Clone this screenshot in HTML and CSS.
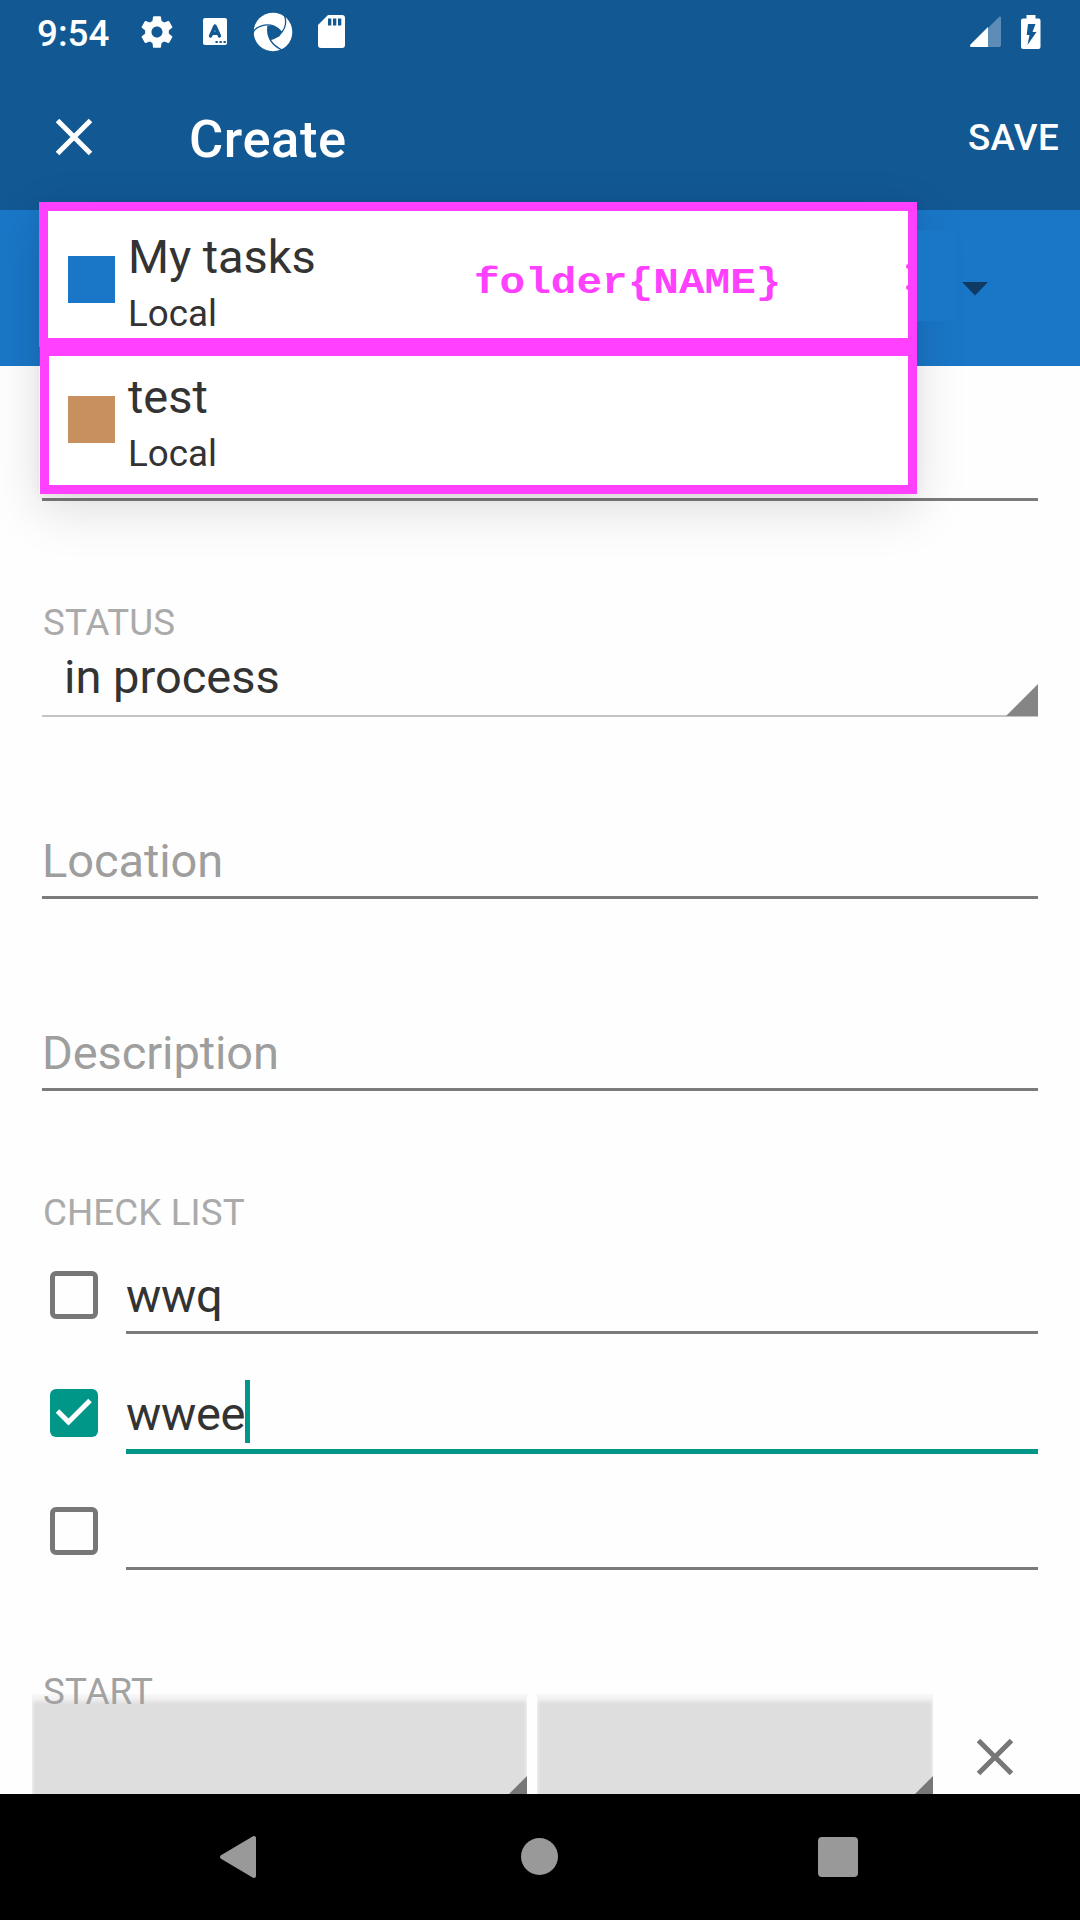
FILE: index.html
```html
<!DOCTYPE html>
<html lang="en">
<head>
<meta charset="utf-8">
<title>Create</title>
<link rel="stylesheet" href="styles.css">
</head>
<body>
<div class="screen">
  <header class="header">
    <div class="status-bar">
      <span class="clock">9:54</span>
      <svg class="icon-gear" width="38" height="38" viewBox="0 0 24 24"><path fill="#fff" d="M19.43 12.98c.04-.32.07-.64.07-.98s-.03-.66-.07-.98l2.11-1.65c.19-.15.24-.42.12-.64l-2-3.46c-.12-.22-.39-.3-.61-.22l-2.49 1c-.52-.4-1.08-.73-1.69-.98l-.38-2.65C14.46 2.18 14.25 2 14 2h-4c-.25 0-.46.18-.49.42l-.38 2.65c-.61.25-1.17.59-1.69.98l-2.49-1c-.23-.09-.49 0-.61.22l-2 3.46c-.13.22-.07.49.12.64l2.11 1.65c-.04.32-.07.65-.07.98s.03.66.07.98l-2.11 1.65c-.19.15-.24.42-.12.64l2 3.46c.12.22.39.3.61.22l2.49-1c.52.4 1.08.73 1.69.98l.38 2.65c.03.24.24.42.49.42h4c.25 0 .46-.18.49-.42l.38-2.65c.61-.25 1.17-.59 1.69-.98l2.49 1c.23.09.49 0 .61-.22l2-3.46c.12-.22.07-.49-.12-.64l-2.11-1.65zM12 15.5c-1.93 0-3.5-1.57-3.5-3.5s1.57-3.5 3.5-3.5 3.5 1.57 3.5 3.5-1.57 3.5-3.5 3.5z"/></svg>
      <svg class="icon-keyboard" width="24" height="27" viewBox="0 0 24 27"><rect width="24" height="27" rx="2" fill="#fff"/><path d="M7.500 18L12 8l4.500 10M9 15.200h6" fill="none" stroke="#125893" stroke-width="3.400" stroke-linecap="round" stroke-linejoin="round"/><path d="M12.500 23h2.300v2h-2.300zM16.500 23h2.300v2h-2.300zM20.500 23h2.300v2h-2.300z" fill="#125893"/></svg>
      <svg class="icon-swirl" width="40" height="40" viewBox="0 0 40 40"><circle cx="20" cy="20" r="19.300" fill="#fff"/><path d="M15 14Q21 12 28.500 19.500L26.300 24.500L17 27.500Q14 21 15 14Z" fill="#125893"/><g fill="none" stroke="#125893" stroke-width="1.300"><path d="M0 21C2 15 12 11 21 14Q25.500 16 28.500 20"/><path d="M15 13.500C13.500 24 18 33 30 38.500"/><path d="M17 27.500C26 26 36 16 31.500 3.500"/></g></svg>
      <svg class="icon-sd" width="27" height="33" viewBox="0 0 27 33"><path fill="#fff" d="M10 0h14a3 3 0 0 1 3 3v27a3 3 0 0 1-3 3H3a3 3 0 0 1-3-3V10z"/><path fill="#125893" d="M10 3.500h3.300v7H10zM15 3.500h3.300v7H15zM20 3.500h3.300v7H20z"/></svg>
      <span class="spacer"></span>
      <svg class="icon-signal" width="31" height="31" viewBox="0 0 31 31"><path fill="#5d8db6" d="M18 12L29 1q2-1.500 2 1v27q0 2-2 2H18z"/><path fill="#fff" d="M18 11v20H1.500Q-1 30.500.500 28.500z"/></svg>
      <svg class="icon-battery" width="20" height="34" viewBox="0 0 20 34"><path fill="#fff" d="M5.500 0h9v3.500h3.200Q19.500 3.500 19.500 5.500v26.500q0 2-2 2H2q-2 0-2-2V5.500q0-2 2-2h3.500z"/><path fill="#125893" d="M7 9h7.500l-3 8H15.500L6.500 30l2-10H5.700z"/></svg>
    </div>
    <div class="app-bar">
      <svg class="icon-close" width="38" height="38" viewBox="0 0 38 38"><path d="M2.500 2.500l33 33M35.500 2.500l-33 33" stroke="#fff" stroke-width="5"/></svg>
      <h1 class="title">Create</h1>
      <span class="save">SAVE</span>
    </div>
  </header>
  <div class="folder-bar">
    <svg class="folder-arrow" width="26" height="14" viewBox="0 0 26 14"><path d="M0 0h26L13 13.500z" fill="#0f3a63"/></svg>
  </div>
  <main class="form">
    <div class="field field-name"></div>
    <div class="label label-status">STATUS</div>
    <div class="spinner">in process<svg class="corner" width="32" height="32" viewBox="0 0 32 32"><path d="M32 0v32H0z" fill="#858585"/></svg></div>
    <div class="field field-location">Location</div>
    <div class="field field-description">Description</div>
    <div class="label label-checklist">CHECK LIST</div>
    <ul class="checklist">
      <li class="check-row"><span class="box"></span><span class="check-text">wwq</span></li>
      <li class="check-row checked"><span class="box"><svg width="48" height="48" viewBox="0 0 48 48"><path d="M7.500 22L18.500 33L40 11.500" fill="none" stroke="#fff" stroke-width="5"/></svg></span><span class="check-text focused">wwee<i class="caret"></i></span></li>
      <li class="check-row"><span class="box"></span><span class="check-text"></span></li>
    </ul>
    <div class="label label-start">START</div>
    <div class="date-row">
      <span class="picker picker-date"><svg width="18" height="18" viewBox="0 0 18 18"><path d="M18 0v18H0z" fill="#777"/></svg></span>
      <span class="picker picker-time"><svg width="18" height="18" viewBox="0 0 18 18"><path d="M18 0v18H0z" fill="#777"/></svg></span>
      <svg class="icon-clear" width="38" height="38" viewBox="0 0 38 38"><path d="M2.500 2.500l33 33M35.500 2.500l-33 33" stroke="#777" stroke-width="5"/></svg>
    </div>
  </main>
  <nav class="nav-bar">
    <svg class="nav-back" width="38" height="44" viewBox="0 0 38 44"><path d="M35 3v38L3 22z" fill="#999" stroke="#999" stroke-width="4" stroke-linejoin="round"/></svg>
    <span class="nav-home"></span>
    <span class="nav-recent"></span>
  </nav>
  <div class="popup">
    <div class="option option-first"><span class="swatch blue"></span><div class="names"><div class="name">My tasks</div><div class="account">Local</div></div><span class="annotation">folder{NAME}</span><i class="tick tick-top"></i><i class="tick tick-bottom"></i></div>
    <div class="option option-second"><span class="swatch brown"></span><div class="names"><div class="name">test</div><div class="account">Local</div></div></div>
  </div>
  <div class="shade-patch"></div>
</div>
</body>
</html>
```
FILE: styles.css
```css
* { box-sizing: border-box; }
body { margin: 0; font-family: Roboto, sans-serif; color: #333; }
svg { display: block; flex: none; }
.screen { position: relative; width: 1080px; height: 1920px; overflow: hidden; background: #fefefe; display: flex; flex-direction: column; }

.header { height: 210px; flex: none; background: #125893; color: #fff; }
.status-bar { height: 63px; display: flex; align-items: center; padding: 0 39px 0 37px; }
.clock { width: 101px; font-size: 36.75px; font-weight: 500; line-height: 44px; padding-top: 4px; }
.icon-keyboard { margin-left: 27px; }
.icon-swirl { margin-left: 26px; }
.icon-sd { margin-left: 25px; }
.spacer { flex: 1; }
.icon-signal { margin-right: 1px; }
.icon-battery { margin-left: 19px; }
.app-bar { height: 147px; display: flex; align-items: center; padding: 0 21px 0 55px; }
.title { margin: 4px 0 0 96px; font-size: 52.5px; font-weight: 500; line-height: 62px; letter-spacing: .55px; flex: 1; }
.save { font-size: 36.75px; font-weight: 500; line-height: 44px; margin-top: 2px; letter-spacing: .35px; }

.folder-bar { height: 156px; flex: none; background: #1a76c7; display: flex; justify-content: flex-end; padding: 72px 92px 0 0; }

.form { height: 1428px; flex: none; overflow: hidden; display: flex; flex-direction: column; padding: 0 42px; }
.label { font-size: 36.75px; line-height: 44px; height: 44px; color: #aaa; padding: 1px 0 0 1px; letter-spacing: .1px; flex: none; }
.field { flex: none; height: 66px; font-size: 47px; line-height: 56px; letter-spacing: -.1px; color: #9e9e9e; border-bottom: 3px solid #7b7b7b; }
.field-name { height: 135px; }
.label-status { margin-top: 99px; }
.spinner { position: relative; flex: none; margin-top: 5px; height: 68px; padding-left: 22px; font-size: 47px; line-height: 56px; border-bottom: 2px solid #c4c4c4; }
.corner { position: absolute; right: 0; bottom: -1px; }
.field-location { margin-top: 116px; }
.field-description { margin-top: 126px; }
.label-checklist { margin-top: 99px; }
.checklist { list-style: none; margin: 34px 0 0; padding: 0; flex: none; }
.check-row { height: 118px; display: flex; align-items: flex-start; }
.box { width: 48px; height: 48px; margin: 3px 28px 0 8px; border: 5px solid #777; border-radius: 6px; }
.checked .box { background: #009688; border: 0; }
.check-text { flex: 1; height: 66px; font-size: 47px; line-height: 56px; letter-spacing: -.35px; border-bottom: 3px solid #7b7b7b; display: flex; }
.focused { height: 68px; border-bottom: 5px solid #009688; }
.caret { width: 5px; height: 63px; margin-top: -6px; background: #009688; }
.label-start { margin-top: 47px; position: relative; z-index: 1; color: #a2a2a2; }
.date-row { flex: none; display: flex; margin: -19px 0 0 -10px; height: 100px; }
.picker { display: flex; align-items: flex-end; justify-content: flex-end; background: linear-gradient(#f8f8f8 0, #f3f3f3 4px, #dedede 10px); box-shadow: inset 3px 0 3px -2px #f3f3f3, inset -3px 0 3px -2px #f3f3f3; }
.picker-date { width: 495px; }
.picker-time { width: 396px; margin-left: 10px; }
.icon-clear { margin: 43.500px 0 0 43px; }

.nav-bar { height: 126px; flex: none; background: #000; display: flex; align-items: center; }
.nav-back { margin-left: 219px; }
.nav-home { width: 37px; height: 37px; margin-left: 264px; margin-bottom: 1px; border-radius: 50%; background: #999; }
.nav-recent { width: 40px; height: 40px; margin-left: 260px; border-radius: 4px; background: #999; }

.popup { position: absolute; left: 39px; top: 202px; width: 878px; height: 292px; display: flex; flex-direction: column; align-items: flex-end; box-shadow: 0 16px 48px rgba(0, 0, 0, .13), 0 2px 10px rgba(0, 0, 0, .06); }
.option { position: relative; border: 9px solid #ff40ff; background: #fff; display: flex; height: 146px; overflow: hidden; }
.option-first { width: 878px; padding: 14px 0 0 20px; height: 145px; }
.option-second { width: 877px; padding: 9px 0 0 19px; height: 147px; }
.swatch { width: 47px; height: 47px; margin-top: 31px; flex: none; }
.blue { background: #1a76c7; }
.brown { background: #c9905f; }
.names { margin-left: 13px; margin-top: 4px; width: 340px; flex: none; }
.name { font-size: 47px; line-height: 56px; height: 63px; letter-spacing: -.05px; }
.account { font-size: 36.75px; line-height: 44px; }
.annotation { font-family: "Liberation Mono", monospace; font-weight: 700; font-size: 42.7px; line-height: 48px; height: 48px; margin: 35px 0 0 6px; color: #ff40ff; transform: scaleY(.86); }
.tick { position: absolute; right: -3px; width: 5px; height: 5px; border-radius: 50%; background: #ff40ff; }
.tick-top { top: 53px; }
.tick-bottom { top: 74px; }
.shade-patch { position: absolute; left: 917px; top: 230px; width: 39px; height: 91px; background: #1a76c7; }
```
